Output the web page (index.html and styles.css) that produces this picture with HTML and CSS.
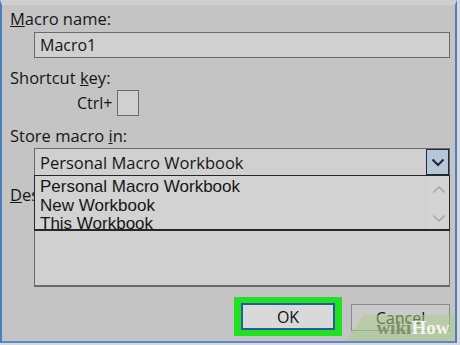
FILE: index.html
```html
<!DOCTYPE html>
<html lang="en">
<head>
    <meta charset="UTF-8">
    <meta name="viewport" content="width=device-width, initial-scale=1.0">
    <title>Record Macro</title>
    <link rel="stylesheet" href="styles.css">
</head>
<body>
    <div class="dialog">
        <label class="field-label first"><u>M</u>acro name:</label>
        <div class="text-box">Macro1</div>

        <label class="field-label">Shortcut <u>k</u>ey:</label>
        <div class="shortcut-row">
            <span>Ctrl+</span>
            <div class="key-box"></div>
        </div>

        <label class="field-label">Store macro <u>i</u>n:</label>
        <div class="combo">
            <span class="combo-text">Personal Macro Workbook</span>
            <div class="combo-arrow">
                <svg width="14" height="9" viewBox="0 0 14 9"><path d="M1.5 1.5 L7 7 L12.5 1.5" fill="none" stroke="#1b2440" stroke-width="2"/></svg>
            </div>
            <ul class="combo-list">
                <li>Personal Macro Workbook</li>
                <li>New Workbook</li>
                <li>This Workbook</li>
                <div class="list-scroll">
                    <svg width="14" height="9" viewBox="0 0 14 9"><path d="M1.5 7.5 L7 2 L12.5 7.5" fill="none" stroke="#a8a8a8" stroke-width="1.6"/></svg>
                    <svg width="14" height="9" viewBox="0 0 14 9"><path d="M1.5 1.5 L7 7 L12.5 1.5" fill="none" stroke="#a8a8a8" stroke-width="1.6"/></svg>
                </div>
            </ul>
        </div>

        <label class="field-label desc-label"><u>D</u>escription:</label>
        <div class="text-area"></div>

        <div class="button-row">
            <div class="highlight">
                <button class="btn btn-ok">OK</button>
            </div>
            <button class="btn btn-cancel">Cancel</button>
        </div>

        <div class="watermark"><span class="wiki">wiki</span><span class="how">How</span></div>
    </div>
</body>
</html>
```

FILE: styles.css
```css
body {
    margin: 0;
    padding: 0;
    background-color: #d6d8dc;
    font-family: "Open Sans", "Noto Sans", sans-serif;
    color: #161616;
}
.dialog {
    position: relative;
    width: 457px;
    height: 343px;
    box-sizing: border-box;
    background-color: #c4c4c4;
    border-top: 5px solid #cfcfcf;
    border-left: 2px solid #4d7fbf;
    border-right: 2px solid #4d7fbf;
    border-bottom: 2px solid #5a8cc8;
    padding: 0 5px 0 8px;
    overflow: hidden;
}
.field-label {
    display: block;
    font-size: 16.5px;
    line-height: 20px;
    margin-top: 10px;
}
.field-label.first {
    margin-top: 4px;
}
.text-box {
    margin: 3px 0 0 24px;
    height: 26px;
    box-sizing: border-box;
    border: 1px solid #6a6a6a;
    background-color: #d0d0d0;
    font-size: 16px;
    line-height: 24px;
    padding-left: 5px;
}
.shortcut-row {
    display: flex;
    align-items: center;
    gap: 4px;
    margin: 2px 0 0 67px;
    font-size: 16px;
}
.key-box {
    width: 22px;
    height: 26px;
    box-sizing: border-box;
    border: 1px solid #6a6a6a;
    background-color: #d0d0d0;
}
.combo {
    position: relative;
    margin: 2px 0 0 24px;
    height: 28px;
    box-sizing: border-box;
    border: 1px solid #6a6a6a;
    background-color: #d0d0d0;
    display: flex;
    align-items: center;
}
.combo-text {
    flex: 1;
    padding-left: 5px;
    font-size: 16.5px;
}
.combo-arrow {
    width: 23px;
    height: 26px;
    box-sizing: border-box;
    border: 1px solid #1d2748;
    background-color: #b7c7d6;
    display: flex;
    align-items: center;
    justify-content: center;
}
.combo-list {
    position: absolute;
    z-index: 2;
    left: -1px;
    right: -1px;
    top: 26px;
    height: 56px;
    box-sizing: border-box;
    margin: 0;
    padding: 2px 0 0 5px;
    list-style: none;
    border: 1px solid #262626;
    border-bottom-width: 2px;
    background-color: #d2d2d2;
    font-family: "Liberation Sans", Arial, sans-serif;
    font-size: 17px;
    line-height: 18.5px;
    overflow: hidden;
}
.combo-list li {
    height: 18.5px;
}
.list-scroll {
    position: absolute;
    right: 0;
    top: 0;
    bottom: 0;
    width: 21px;
    background-color: #d4d4d4;
    display: flex;
    flex-direction: column;
    align-items: center;
    justify-content: space-between;
    padding: 9px 0 6px;
    box-sizing: border-box;
}
.desc-label {
    margin-top: 9px;
}
.text-area {
    margin: 2px 0 0 24px;
    height: 80px;
    box-sizing: border-box;
    border: 1px solid #6a6a6a;
    border-bottom-width: 2px;
    background-color: #d0d0d0;
}
.button-row {
    display: flex;
    justify-content: flex-end;
    align-items: center;
    gap: 9px;
    margin-top: 10px;
}
.highlight {
    background-color: #22e022;
    padding: 6px 7px;
}
.btn {
    font-family: "Open Sans", "Noto Sans", sans-serif;
    font-size: 16px;
    color: #111;
    height: 27px;
    padding: 0;
    box-sizing: border-box;
}
.btn-ok {
    width: 94px;
    border: 2px solid #1f5d9e;
    background-color: #d9d9d9;
}
.btn-cancel {
    width: 99px;
    border: 1px solid #8a8a8a;
    background-color: #cacaca;
    margin-top: 2px;
}
.watermark {
    position: absolute;
    right: -20px;
    bottom: -4px;
    width: 100px;
    height: 30px;
    padding-left: 22px;
    transform: skewX(-35deg);
    background-color: rgba(170, 205, 140, 0.55);
    font-family: "Liberation Serif", serif;
    font-weight: bold;
    font-size: 19px;
    line-height: 26px;
}
.watermark span {
    display: inline-block;
    transform: skewX(35deg);
}
.wiki {
    color: #7d8f70;
}
.how {
    color: #f4f4f0;
}
```
